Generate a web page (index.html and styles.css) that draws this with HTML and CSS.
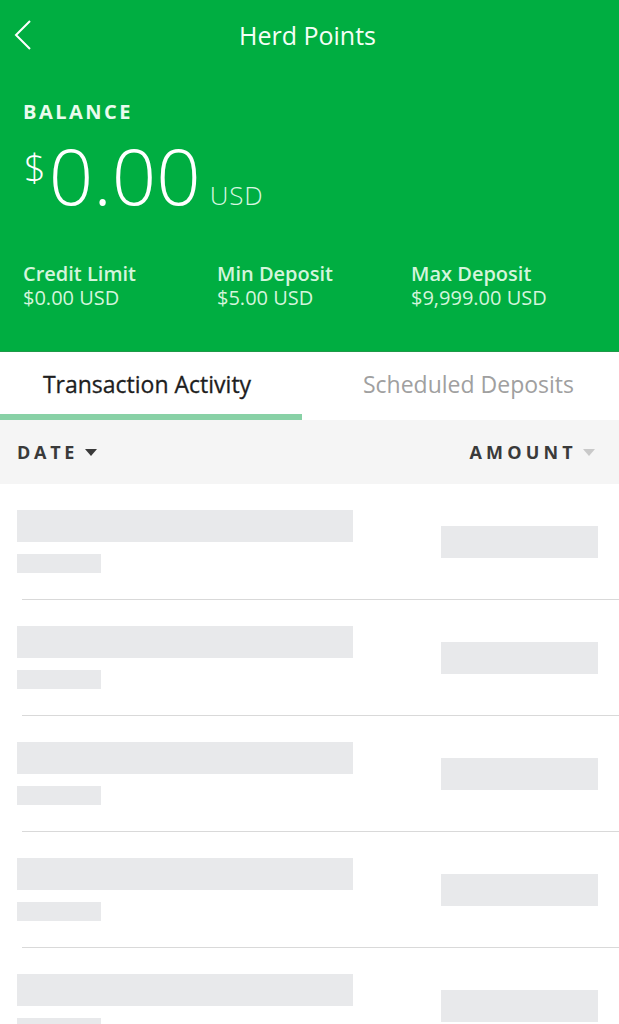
FILE: index.html
```html
<!DOCTYPE html>
<html>
<head>
<meta charset="utf-8">
<link rel="stylesheet" href="styles.css">
</head>
<body>
<div class="app">
  <header class="hero">
    <div class="topbar">
      <svg class="back" width="20" height="32" viewBox="0 0 20 32"><path d="M17 2 L3 16 L17 30" fill="none" stroke="#fff" stroke-width="2"/></svg>
      <div class="title">Herd Points</div>
    </div>
    <div class="balance-label">BALANCE</div>
    <div class="balance">
      <span class="cur">$</span><span class="amt">0.00</span><span class="usd">USD</span>
    </div>
    <div class="stats">
      <div class="stat"><div class="stat-label">Credit Limit</div><div class="stat-val">$0.00 USD</div></div>
      <div class="stat"><div class="stat-label">Min Deposit</div><div class="stat-val">$5.00 USD</div></div>
      <div class="stat"><div class="stat-label">Max Deposit</div><div class="stat-val">$9,999.00 USD</div></div>
    </div>
  </header>
  <nav class="tabs">
    <div class="tab active"><span>Transaction Activity</span></div>
    <div class="tab"><span>Scheduled Deposits</span></div>
  </nav>
  <div class="sortbar">
    <div class="sort date">DATE <span class="tri dark"></span></div>
    <div class="sort amount-h">AMOUNT <span class="tri light"></span></div>
  </div>
  <div class="list">
    <div class="row"><div class="left"><div class="sk big"></div><div class="sk small"></div></div><div class="sk amount"></div></div>
    <div class="row"><div class="left"><div class="sk big"></div><div class="sk small"></div></div><div class="sk amount"></div></div>
    <div class="row"><div class="left"><div class="sk big"></div><div class="sk small"></div></div><div class="sk amount"></div></div>
    <div class="row"><div class="left"><div class="sk big"></div><div class="sk small"></div></div><div class="sk amount"></div></div>
    <div class="row"><div class="left"><div class="sk big"></div><div class="sk small"></div></div><div class="sk amount"></div></div>
  </div>
</div>
</body>
</html>
```

FILE: styles.css
```css
* { box-sizing: border-box; }
html, body { margin: 0; padding: 0; }
body {
  font-family: "Open Sans", "Noto Sans", sans-serif;
  background: #fff;
  width: 619px;
  height: 1024px;
  overflow: hidden;
}
.hero {
  background: #00ae41;
  height: 352px;
  border-bottom: 1px solid #1e9a48;
  color: #fff;
  padding: 0 0 0 23px;
}
.topbar {
  height: 70px;
  display: flex;
  align-items: center;
  position: relative;
  margin-left: -23px;
}
.back {
  position: absolute;
  left: 13px;
  top: 19px;
}
.title {
  flex: 1;
  text-align: center;
  font-size: 25px;
  font-weight: 400;
  padding-right: 4px;
  margin-top: -1px;
  color: #f4fff6;
}
.balance-label {
  margin-top: 30px;
  font-size: 20px;
  font-weight: 700;
  letter-spacing: 2.5px;
  line-height: 24px;
  color: #eafbee;
}
.balance {
  display: flex;
  align-items: baseline;
  height: 104px;
  margin-top: 12px;
}
.cur {
  align-self: flex-start;
  font-size: 38px;
  font-weight: 300;
  line-height: 1;
  margin-top: 12px;
  margin-left: 1px;
}
.amt {
  font-size: 78px;
  font-weight: 300;
  line-height: 1;
  margin-left: 3px;
}
.usd {
  font-size: 26px;
  font-weight: 300;
  letter-spacing: 0.8px;
  margin-left: 9px;
  line-height: 1;
  color: #d9f7e1;
}
.stats {
  display: grid;
  grid-template-columns: 194px 194px 1fr;
  margin-top: 22px;
}
.stat-label {
  font-size: 20px;
  font-weight: 600;
  line-height: 24px;
  color: #d4f5dc;
}
.stat-val {
  font-size: 20px;
  font-weight: 400;
  line-height: 24px;
  color: #d4f5dc;
}
.tabs {
  display: flex;
  height: 68px;
  background: #fff;
}
.tab {
  display: flex;
  align-items: center;
  justify-content: center;
  font-size: 23px;
  font-weight: 400;
  color: #a0a0a0;
  border-bottom: 6px solid transparent;
  padding-top: 2px;
}
.tab.active {
  color: #1e1e1e;
  border-bottom-color: #88d1a6;
  width: 302px;
  padding-right: 8px;
  -webkit-text-stroke: 0.3px #1e1e1e;
}
.tab:not(.active) {
  width: 317px;
  padding-left: 16px;
}
.sortbar {
  height: 64px;
  background: #f5f5f5;
  display: flex;
  justify-content: space-between;
  align-items: center;
  padding: 0 24px 0 17px;
}
.sort {
  font-size: 18px;
  font-weight: 700;
  letter-spacing: 3.7px;
  color: #3a3a3a;
  display: flex;
  align-items: center;
}
.sort.amount-h { letter-spacing: 4.2px; }
.tri {
  display: inline-block;
  width: 0;
  height: 0;
  border-left: 6px solid transparent;
  border-right: 6px solid transparent;
  border-top: 7px solid #3a3a3a;
  margin-left: 7px;
}
.tri.light { border-top-color: #c9c9c9; margin-left: 6px; }
.row {
  height: 116px;
  display: flex;
  align-items: center;
  justify-content: space-between;
  padding: 0 21px 0 17px;
  position: relative;
}
.row::after {
  content: "";
  position: absolute;
  left: 22px;
  right: 0;
  bottom: 0;
  height: 1px;
  background: #d9d9d9;
}
.left {
  display: flex;
  flex-direction: column;
  gap: 12px;
  margin-top: -2px;
}
.sk { background: #e8e9eb; }
.sk.big { width: 336px; height: 32px; }
.sk.small { width: 84px; height: 19px; }
.sk.amount { width: 157px; height: 32px; }
```
